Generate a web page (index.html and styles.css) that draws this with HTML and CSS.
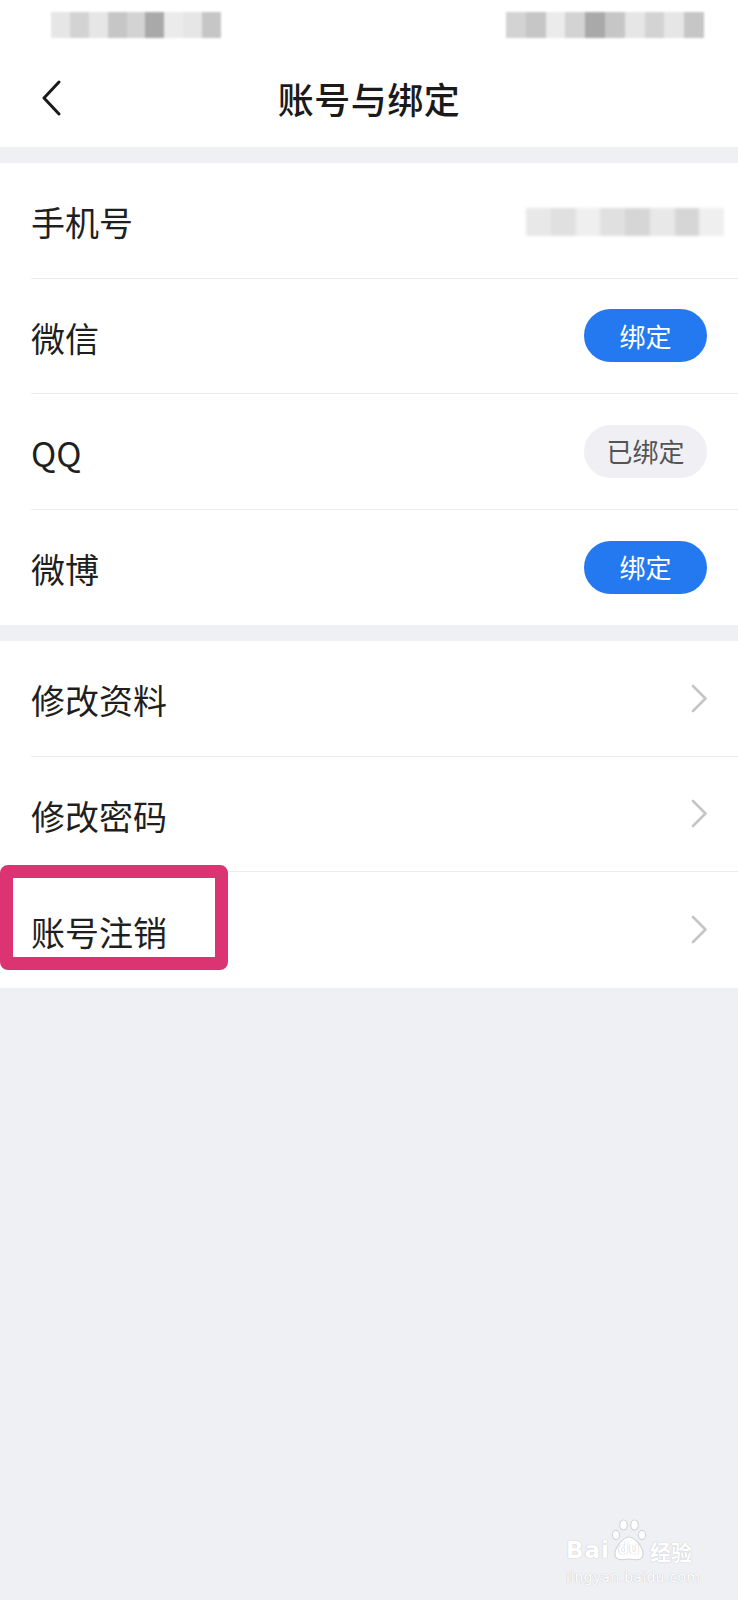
FILE: index.html
```html
<!DOCTYPE html>
<html lang="zh-CN">
<head>
<meta charset="utf-8">
<title>账号与绑定</title>
<link rel="stylesheet" href="styles.css">
</head>
<body>
<div class="page">
  <header class="header">
    <div class="status">
      <div class="mosaic mosaic-left">
        <span class="c1"></span><span class="c2"></span><span class="c1"></span><span class="c3"></span><span class="c2"></span><span class="c4"></span><span class="c5"></span><span class="c1"></span><span class="c3"></span>
      </div>
      <div class="mosaic mosaic-right">
        <span class="c2"></span><span class="c3"></span><span class="c5"></span><span class="c2"></span><span class="c4"></span><span class="c3"></span><span class="c1"></span><span class="c2"></span><span class="c1"></span><span class="c3"></span>
      </div>
    </div>
    <div class="navbar">
      <svg class="back" width="22" height="36" viewBox="0 0 22 36"><polyline points="18,2 3,18 18,34" fill="none" stroke="#1a1a1a" stroke-width="3" stroke-linecap="round" stroke-linejoin="round"/></svg>
      <h1 class="title">账号与绑定</h1>
    </div>
  </header>

  <section class="group">
    <div class="row">
      <span class="label">手机号</span>
      <div class="mosaic mosaic-phone">
        <span class="p1"></span><span class="p2"></span><span class="p3"></span><span class="p2"></span><span class="p4"></span><span class="p1"></span><span class="p4"></span><span class="p3"></span>
      </div>
    </div>
    <div class="row">
      <span class="label">微信</span>
      <span class="pill pill-blue">绑定</span>
    </div>
    <div class="row">
      <span class="label">QQ</span>
      <span class="pill pill-gray">已绑定</span>
    </div>
    <div class="row">
      <span class="label">微博</span>
      <span class="pill pill-blue">绑定</span>
    </div>
  </section>

  <section class="group">
    <div class="row">
      <span class="label">修改资料</span>
      <svg class="chev" width="17" height="29" viewBox="0 0 17 29"><polyline points="2,2 14.5,14.5 2,27" fill="none" stroke="#c4c4c9" stroke-width="2.6" stroke-linecap="round" stroke-linejoin="round"/></svg>
    </div>
    <div class="row">
      <span class="label">修改密码</span>
      <svg class="chev" width="17" height="29" viewBox="0 0 17 29"><polyline points="2,2 14.5,14.5 2,27" fill="none" stroke="#c4c4c9" stroke-width="2.6" stroke-linecap="round" stroke-linejoin="round"/></svg>
    </div>
    <div class="row row-mark">
      <span class="label">账号注销</span>
      <svg class="chev" width="17" height="29" viewBox="0 0 17 29"><polyline points="2,2 14.5,14.5 2,27" fill="none" stroke="#c4c4c9" stroke-width="2.6" stroke-linecap="round" stroke-linejoin="round"/></svg>
      <div class="highlight"></div>
    </div>
  </section>

  <div class="watermark">
    <div class="wm-top">
      <span class="wm-bai">Bai</span>
      <span class="wm-paw">
        <svg width="36" height="44" viewBox="0 0 36 44">
          <ellipse cx="5" cy="17" rx="3.6" ry="4.6" fill="#fff" stroke="#d3d4d9" stroke-width="1.2"/>
          <ellipse cx="12.5" cy="7" rx="3.8" ry="5" fill="#fff" stroke="#d3d4d9" stroke-width="1.2"/>
          <ellipse cx="23.5" cy="7" rx="3.8" ry="5" fill="#fff" stroke="#d3d4d9" stroke-width="1.2"/>
          <ellipse cx="31" cy="17" rx="3.6" ry="4.6" fill="#fff" stroke="#d3d4d9" stroke-width="1.2"/>
          <path d="M18 19 C 24 19, 33 30, 32 37 C 31 43, 24 42, 18 41 C 12 42, 5 43, 4 37 C 3 30, 12 19, 18 19 Z" fill="#fff" stroke="#d3d4d9" stroke-width="1.2"/>
        </svg>
        <span class="wm-du">du</span>
      </span>
      <span class="wm-jy">经验</span>
    </div>
    <div class="wm-url">jingyan.baidu.com</div>
  </div>
</div>
</body>
</html>
```

FILE: styles.css
```css
* { box-sizing: border-box; }

html, body {
  margin: 0;
  padding: 0;
  background: #eff0f4;
}

body {
  font-family: "Noto Sans CJK SC", "Noto Sans", sans-serif;
  color: #1f1f1f;
}

.page {
  position: relative;
  width: 738px;
  min-height: 1600px;
  background: #eff0f4;
}

.header {
  background: #fff;
  height: 147px;
  display: flex;
  flex-direction: column;
}

.status {
  height: 50px;
  display: flex;
  justify-content: space-between;
  align-items: flex-start;
  padding: 12px 34px 0 51px;
}

.mosaic {
  display: flex;
  filter: blur(1.2px);
}

.mosaic span { display: block; height: 100%; flex: 1; }

.mosaic-left { width: 170px; height: 26px; }
.mosaic-right { width: 198px; height: 26px; }

.c1 { background: #e6e6e6; }
.c2 { background: #d3d3d3; }
.c3 { background: #c6c6c6; }
.c4 { background: #a9a9a9; }
.c5 { background: #ebebeb; }

.navbar {
  position: relative;
  flex: 1;
  display: flex;
  align-items: center;
  justify-content: center;
  padding-bottom: 2px;
}

.back {
  position: absolute;
  left: 41px;
  top: 30px;
}

.title {
  margin: 0;
  font-size: 36px;
  font-weight: 500;
  letter-spacing: 0.5px;
  color: #1a1a1a;
}

.group {
  background: #fff;
  margin-top: 16px;
}

.row {
  position: relative;
  height: 115.5px;
  margin-left: 31px;
  padding-right: 31px;
  display: flex;
  align-items: center;
  justify-content: space-between;
  border-bottom: 1px solid #ececef;
}

.row:last-child { border-bottom: none; }

.label {
  font-size: 34px;
  line-height: 1;
  color: #1f1f1f;
  padding-top: 4px;
}

.mosaic-phone {
  width: 198px;
  height: 28px;
  margin-right: -17px;
  margin-top: 4px;
  filter: blur(1.5px);
}

.p1 { background: #e8e8e8; }
.p2 { background: #e0e0e0; }
.p3 { background: #efefef; }
.p4 { background: #d6d6d6; }

.pill {
  width: 123px;
  height: 53px;
  border-radius: 27px;
  display: flex;
  align-items: center;
  justify-content: center;
  font-size: 26px;
  line-height: 1;
}

.pill-blue {
  background: #2479f1;
  color: #fff;
}

.pill-gray {
  background: #f0f0f4;
  color: #545454;
}

.chev { margin-right: -1px; }

.highlight {
  position: absolute;
  left: -31px;
  top: -7px;
  width: 228px;
  height: 105px;
  border: 13px solid #dc3472;
  border-radius: 8px;
  pointer-events: none;
}

.watermark {
  position: absolute;
  left: 566px;
  top: 1518px;
  width: 140px;
  color: #fff;
  text-shadow: 0 0 1px #c6c7cc, 0 0 1px #c6c7cc;
  font-family: "DejaVu Sans", sans-serif;
}

.wm-top {
  display: flex;
  align-items: flex-end;
  height: 44px;
}

.wm-bai {
  font-size: 23px;
  font-weight: 700;
  line-height: 1;
  letter-spacing: 1px;
}

.wm-paw {
  position: relative;
  width: 36px;
  height: 44px;
  margin-left: 1px;
}

.wm-paw svg {
  position: absolute;
  left: 0;
  top: 0;
}

.wm-du {
  position: absolute;
  left: 7px;
  top: 24px;
  font-size: 15px;
  font-weight: 700;
  line-height: 1;
}

.wm-jy {
  font-family: "Noto Sans CJK SC", sans-serif;
  font-weight: 700;
  font-size: 21px;
  line-height: 1;
  margin-left: 3px;
}

.wm-url {
  font-size: 14px;
  line-height: 1;
  margin-top: 8px;
  letter-spacing: 0.3px;
}
```
